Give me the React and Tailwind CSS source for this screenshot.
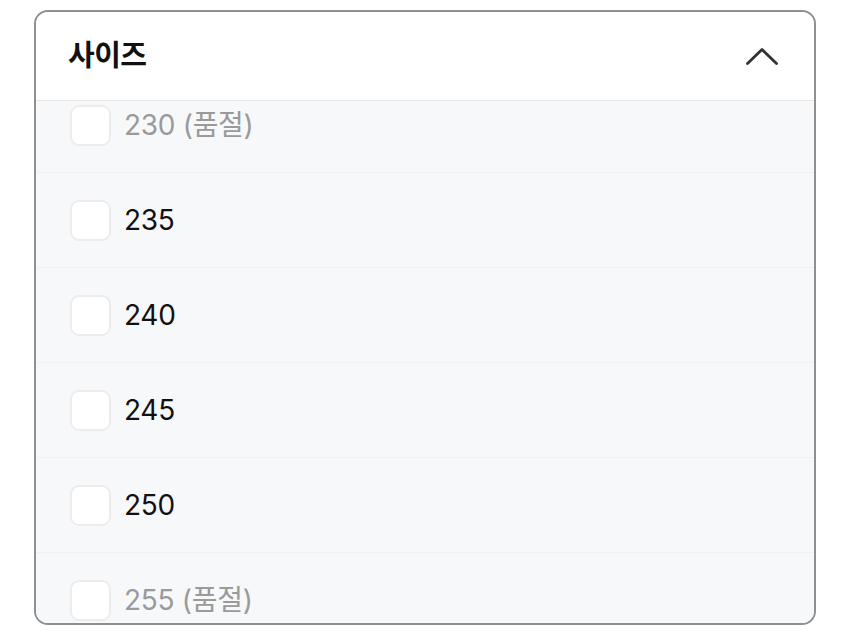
import { useState } from 'react';

const SIZES = [
  { value: 230, soldOut: true },
  { value: 235, soldOut: false },
  { value: 240, soldOut: false },
  { value: 245, soldOut: false },
  { value: 250, soldOut: false },
  { value: 255, soldOut: true },
];

const font = { fontFamily: 'Inter, "Noto Sans CJK KR", sans-serif' };

function SizeRow({ size, checked, onToggle }) {
  return (
    <label className="flex h-[95px] items-center gap-[13px] border-b border-[#f0f1f4] pl-[34px] cursor-pointer">
      <span
        onClick={onToggle}
        className={`h-[41px] w-[41px] shrink-0 rounded-[9px] border-2 border-[#ececee] ${checked ? 'bg-gray-900' : 'bg-white'}`}
      />
      <span className={`text-[28px] leading-none tracking-[-0.3px] ${size.soldOut ? 'text-[#9a9a9a]' : 'text-[#111]'}`}>
        {size.value}
        {size.soldOut && ' (품절)'}
      </span>
    </label>
  );
}

export default function App() {
  const [selected, setSelected] = useState([]);

  const toggle = (v) =>
    setSelected((s) => (s.includes(v) ? s.filter((x) => x !== v) : [...s, v]));

  return (
    <div className="h-[635px] w-[850px] bg-white px-[34px] pt-[10px]" style={font}>
      <div className="flex h-[615px] flex-col overflow-hidden rounded-[14px] border-2 border-[#8f8f8f]">
        <div className="flex h-[89px] shrink-0 items-center justify-between border-b border-[#e6e6e6] bg-white pl-[32px] pr-[36px]">
          <h2 className="text-[29px] font-bold tracking-[-0.5px] text-[#111]">사이즈</h2>
          <svg width="32" height="18" viewBox="0 0 32 18" fill="none">
            <path d="M1.5 16.5 L16 2.5 L30.5 16.5" stroke="#333" strokeWidth="2.8" strokeLinecap="round" strokeLinejoin="round" />
          </svg>
        </div>
        <div className="flex-1 overflow-hidden bg-[#f7f8fa]">
          <div className="-mt-[23px]">
            {SIZES.map((s) => (
              <SizeRow
                key={s.value}
                size={s}
                checked={selected.includes(s.value)}
                onToggle={() => !s.soldOut && toggle(s.value)}
              />
            ))}
          </div>
        </div>
      </div>
    </div>
  );
}
